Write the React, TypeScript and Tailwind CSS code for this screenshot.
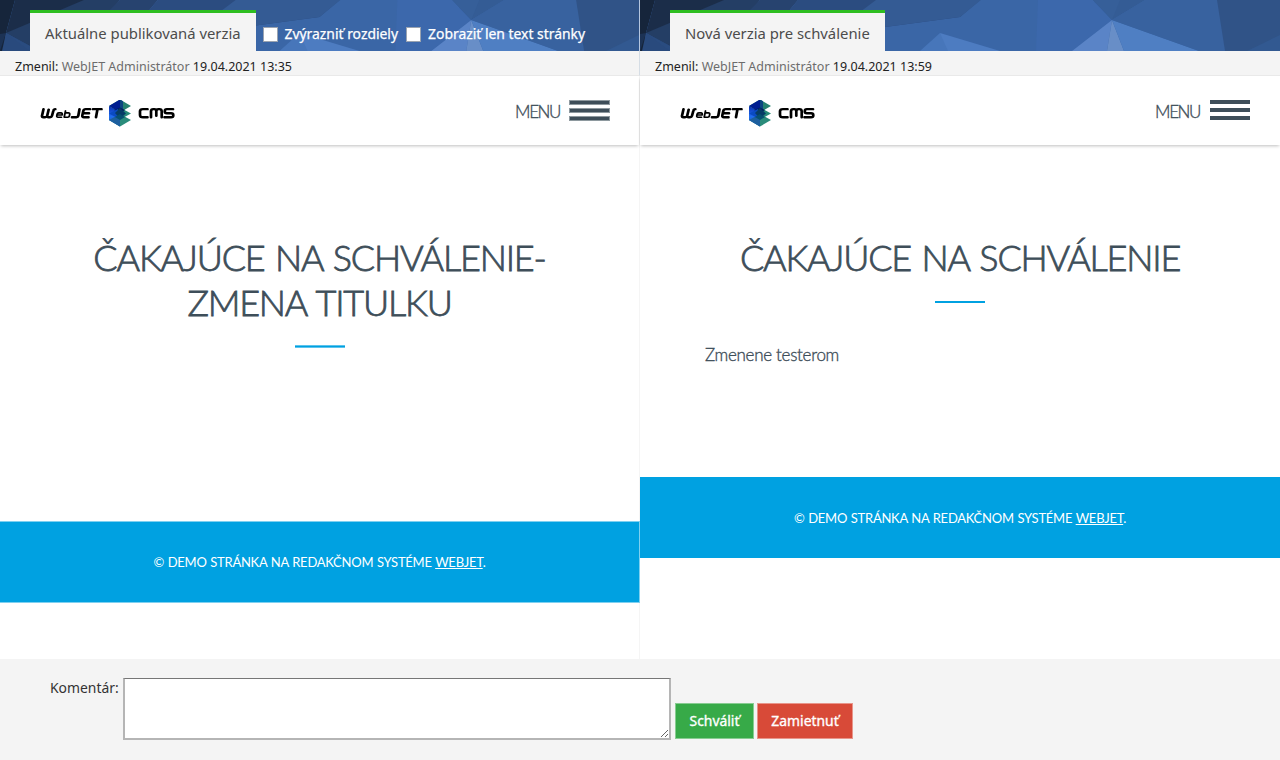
import React from "react";

function PolyBackground() {
  return (
    <svg
      className="absolute inset-0 h-full w-full"
      viewBox="0 0 640 51"
      preserveAspectRatio="none"
      aria-hidden="true"
    >
      <rect width="640" height="51" fill="#3a66a6" />
      <polygon points="0,0 15,0 6,33 4,51 0,51" fill="#16253b" />
      <polygon points="15,0 95,0 30,42 6,33" fill="#1b2d49" />
      <polygon points="84,0 120,0 112,10 30,51 6,33" fill="#243e65" />
      <polygon points="0,34 6,33 0,51" fill="#1c3254" />
      <polygon points="6,33 2,51 30,51 30,46" fill="#294a7d" />
      <polygon points="30,46 6,33 30,51" fill="#2a4c80" />
      <polygon points="120,0 158,0 148,12 108,12" fill="#27436f" />
      <polygon points="158,0 340,0 320,17 245,27 245,12 148,12" fill="#2b4c80" />
      <polygon points="236,0 341,0 320,17 245,27 220,12" fill="#345b94" />
      <polygon points="300,33 280,51 312,51" fill="#4776ba" />
      <polygon points="300,33 360,51 308,51" fill="#4d7cc1" />
      <polygon points="398,0 453,0 472,20 432,51 396,51" fill="#3c68ac" />
      <polygon points="453,0 505,0 472,20" fill="#345c95" />
      <polygon points="453,0 480,0 472,20" fill="#365f99" />
      <polygon points="472,20 432,51 467,51" fill="#5a84c7" />
      <polygon points="472,20 467,51 484,51" fill="#688ec7" />
      <polygon points="472,20 484,51 559,51" fill="#4f7fc3" />
      <polygon points="505,0 578,0 585,51 559,51 472,20" fill="#38629f" />
      <polygon points="577,0 640,0 640,51 585,51" fill="#305387" />
      <polygon points="607,51 640,35 640,51" fill="#325991" />
    </svg>
  );
}

function Checkbox({ label }: { label: string }) {
  return (
    <label className="flex items-center gap-[7px]">
      <input
        type="checkbox"
        className="size-[15px] appearance-none border border-[#9aa3b0] bg-white"
      />
      <span>{label}</span>
    </label>
  );
}

function Logo() {
  return (
    <svg className="h-[28px] w-[135px]" viewBox="0 0 135 28" aria-label="WebJET CMS">
      <defs>
        <linearGradient id="cubeWall" x1="0" y1="0" x2="0" y2="1">
          <stop offset="0" stopColor="#0a2fae" />
          <stop offset="0.5" stopColor="#1f6bf0" />
          <stop offset="1" stopColor="#1f6fa8" />
        </linearGradient>
      </defs>
      <g
        transform="translate(0 .8) scale(1 .88)"
        fill="none"
        stroke="#000"
        strokeWidth="2.700"
        strokeLinejoin="round"
        strokeLinecap="round"
      >
        <path d="M3.500 9.500 2 17q-.2 1.700 1.400 1.700h1.600Q6.800 18.700 7.200 17L8.700 10M7.200 17q-.2 1.700 1.400 1.700H10q1.600 0 2-1.700l1.300-5.500q.4-2 2-2" />
        <path
          strokeWidth="1.800"
          d="M17 16.100h5.200q.4-2.400-1.200-2.400h-2.200q-1.400 0-1.700 1.600l-.3 1.700q-.3 1.700 1.200 1.700h3.500M25.500 11.500l-1.300 7.200h3.500q1.500 0 1.700-1.500l.3-1.800q.2-1.700-1.300-1.700h-2.800"
        />
        <path d="M39.500 9.500 38.300 17q-.3 1.700-2 1.700h-4.300M50 9.500h-4.300q-2 0-2.400 2l-1 5.200q-.3 2 1.600 2h4.600M43 14.100h6M53 9.500h8.500M57.500 9.500 56 18.700" />
        <path d="M107.500 9.500H103q-3 0-3 2.500v4q0 2.700 3 2.700h4.500M111 18.700V12q0-2.500 2.300-2.500h1q2 0 2 2.500v5M116.300 17v-5q0-2.500 2.300-2.500h.8q2.300 0 2.300 2.500v6.700M133 9.500h-6.200q-2 0-2 2.300t2 2.300h4.300q2.200 0 2.200 2.300t-2.200 2.300H124.500" />
      </g>
      <g transform="translate(0 -.5)">
        <polygon points="80,14.500 91,20.500 80,27 69,20.500" fill="#2a8c7b" />
        <polygon points="80,8 91,14 80,20 69,14" fill="#278a78" />
        <polygon points="69,6.500 80,12 80,27 69,20.500" fill="url(#cubeWall)" />
        <polygon points="69,20.500 80,14.500 80,27" fill="#1d5f9e" />
        <polygon points="80,0 91,6.500 80,13 69,6.500" fill="#25826f" />
        <polygon points="80,0 80,13 69,6.500" fill="#001d91" />
        <polygon points="80,0 83,1.700 83,11 80,13" fill="#0c4680" />
        <polygon points="80,8 85,10.500 80,13.500 74,10.500" fill="#001e60" />
        <polygon points="69,14 78,9.500 80,20" fill="#0a4ac2" />
        <polygon points="80,8.500 86,14 80,19 75,13.500" fill="#063c66" />
        <polygon points="80,14.500 85,17.500 80,20.500 75,17.500" fill="#075070" />
      </g>
    </svg>
  );
}

interface PaneProps {
  tab: string;
  date: string;
  options?: string[];
  title: string[];
  body?: string;
  left?: boolean;
}

function Pane({ tab, date, options = [], title, body, left }: PaneProps) {
  return (
    <section
      className={
        left
          ? "flex w-[640px] flex-col border-r border-[#f5f5f5] bg-white"
          : "flex w-[640px] flex-col bg-white"
      }
    >
      <div
        className={
          left
            ? "relative -mr-px h-[51px] overflow-hidden border-r border-[#b5c6df]"
            : "relative h-[51px] overflow-hidden"
        }
      >
        <PolyBackground />
        <div className="relative flex h-full items-start pl-[30px] pt-[10px]">
          <div
            className={
              left
                ? "h-[41px] w-[226px] border-t-3 border-[#2ebe20] bg-[#f4f4f4] pl-[15px] text-[14.85px] leading-[41px] whitespace-nowrap text-[#4c4c4c]"
                : "h-[41px] w-[215px] border-t-3 border-[#2ebe20] bg-[#f4f4f4] pl-[15px] text-[14.85px] leading-[41px] whitespace-nowrap text-[#4c4c4c]"
            }
          >
            {tab}
          </div>
          <div className="ml-[6.5px] flex gap-[8px] pt-[14px] text-[13.9px] leading-[20px] whitespace-nowrap text-white [-webkit-text-stroke:0.25px_white]">
            {options.map((option) => (
              <Checkbox key={option} label={option} />
            ))}
          </div>
        </div>
      </div>
      <div
        className={
          left
            ? "-mr-px h-[25px] border-r border-b border-r-[#d5dde5] border-b-[#e9e9e9] bg-[#f4f4f4] pl-[15px] text-[12.5px] leading-[31px] text-[#222]"
            : "h-[25px] border-b border-[#e9e9e9] bg-[#f4f4f4] pl-[15px] text-[12.5px] leading-[31px] text-[#222]"
        }
      >
        Zmenil: <span className="text-[#6c6c6c]">WebJET Administrátor</span> {date}
      </div>
      <div className="flex h-[69px] shrink-0 items-start justify-between pl-[40px] pr-[30px] pt-[24px] shadow-[0_2px_3px_-1px_rgba(0,0,0,0.25)]">
        <Logo />
        <div
          className={
            left
              ? "-mr-px flex gap-[10px] font-['Lato'] text-[17px] leading-[23px] text-[#3e4e59]"
              : "flex gap-[11px] font-['Lato'] text-[17px] leading-[23px] text-[#3e4e59]"
          }
        >
          <span className="-mr-px font-light tracking-[-1.4px] [-webkit-text-stroke:0.35px_#3e4e59]">MENU</span>
          <span
            className={
              left ? "flex w-[41px] flex-col gap-[3px]" : "flex w-[40px] flex-col gap-[4px]"
            }
          >
            {[0, 1, 2].map((bar) => (
              <span
                key={bar}
                className={left ? "h-[5px] border border-[#8e999f] bg-[#3e4e59]" : "h-[4px] bg-[#3e4e59]"}
              />
            ))}
          </span>
        </div>
      </div>
      <h1 className="mt-[90px] text-center font-['Lato'] text-[36px] leading-[45px] font-light tracking-[-1.2px] text-[#3e4e59] [-webkit-text-stroke:0.8px_#3e4e59] [word-spacing:2px]">
        {title.map((line) => (
          <span key={line} className="block whitespace-nowrap">
            {line}
          </span>
        ))}
      </h1>
      <div
        className={
          left
            ? "mx-auto mt-[20px] h-[3px] w-[50px] shrink-0 border-y border-[#5cc3ec] bg-[#00a1e1]"
            : "mx-auto mt-[21px] h-[2px] w-[50px] shrink-0 bg-[#00a1e1]"
        }
      />
      <p className="mt-[40px] h-[24px] pl-[65px] font-['Lato'] text-[17px] leading-[24px] font-light tracking-[-0.3px] text-[#3e4e59] [-webkit-text-stroke:0.35px_#3e4e59]">
        {body}
      </p>
      <footer
        className={
          left
            ? "-mr-px mt-[109px] h-[82px] shrink-0 border-y border-r border-[#7fd0f0] bg-[#00a1e1] text-center font-['Lato'] text-[13px] leading-[80px] tracking-[-0.25px] text-white [word-spacing:0.6px]"
            : "mt-[110px] h-[81px] shrink-0 bg-[#00a1e1] text-center font-['Lato'] text-[13px] leading-[82px] tracking-[-0.25px] text-white [word-spacing:0.6px]"
        }
      >
        © DEMO STRÁNKA NA REDAKČNOM SYSTÉME{" "}
        <span className="underline underline-offset-1">WEBJET</span>.
      </footer>
    </section>
  );
}

export default function App() {
  return (
    <div className="flex h-[760px] w-[1280px] flex-col overflow-hidden bg-[#f4f4f4] font-['Noto_Sans',sans-serif]">
      <main className="flex h-[659px] overflow-hidden">
        <Pane
          left
          tab="Aktuálne publikovaná verzia"
          date="19.04.2021 13:35"
          options={["Zvýrazniť rozdiely", "Zobraziť len text stránky"]}
          title={["ČAKAJÚCE NA SCHVÁLENIE-", "ZMENA TITULKU"]}
        />
        <Pane
          tab="Nová verzia pre schválenie"
          date="19.04.2021 13:59"
          title={["ČAKAJÚCE NA SCHVÁLENIE"]}
          body="Zmenene testerom"
        />
      </main>
      <form className="flex flex-1 items-start pl-[50px] pt-[19px] text-[13.9px] text-[#333]">
        <label htmlFor="comment" className="w-[73px] leading-[20px]">
          Komentár:
        </label>
        <textarea
          id="comment"
          className="h-[62px] w-[548px] resize border-2 border-t border-[#b5b5b5] border-t-[#767676] bg-white"
        />
        <button
          type="button"
          className="mt-[25px] ml-[4px] h-[36px] w-[79px] border border-[#87cc91] bg-[#37aa48] whitespace-nowrap text-white [-webkit-text-stroke:0.35px_white]"
        >
          Schváliť
        </button>
        <button
          type="button"
          className="mt-[25px] ml-[3px] h-[36px] w-[96px] border border-[#e8958a] bg-[#d84a38] whitespace-nowrap text-white [-webkit-text-stroke:0.35px_white]"
        >
          Zamietnuť
        </button>
      </form>
    </div>
  );
}
